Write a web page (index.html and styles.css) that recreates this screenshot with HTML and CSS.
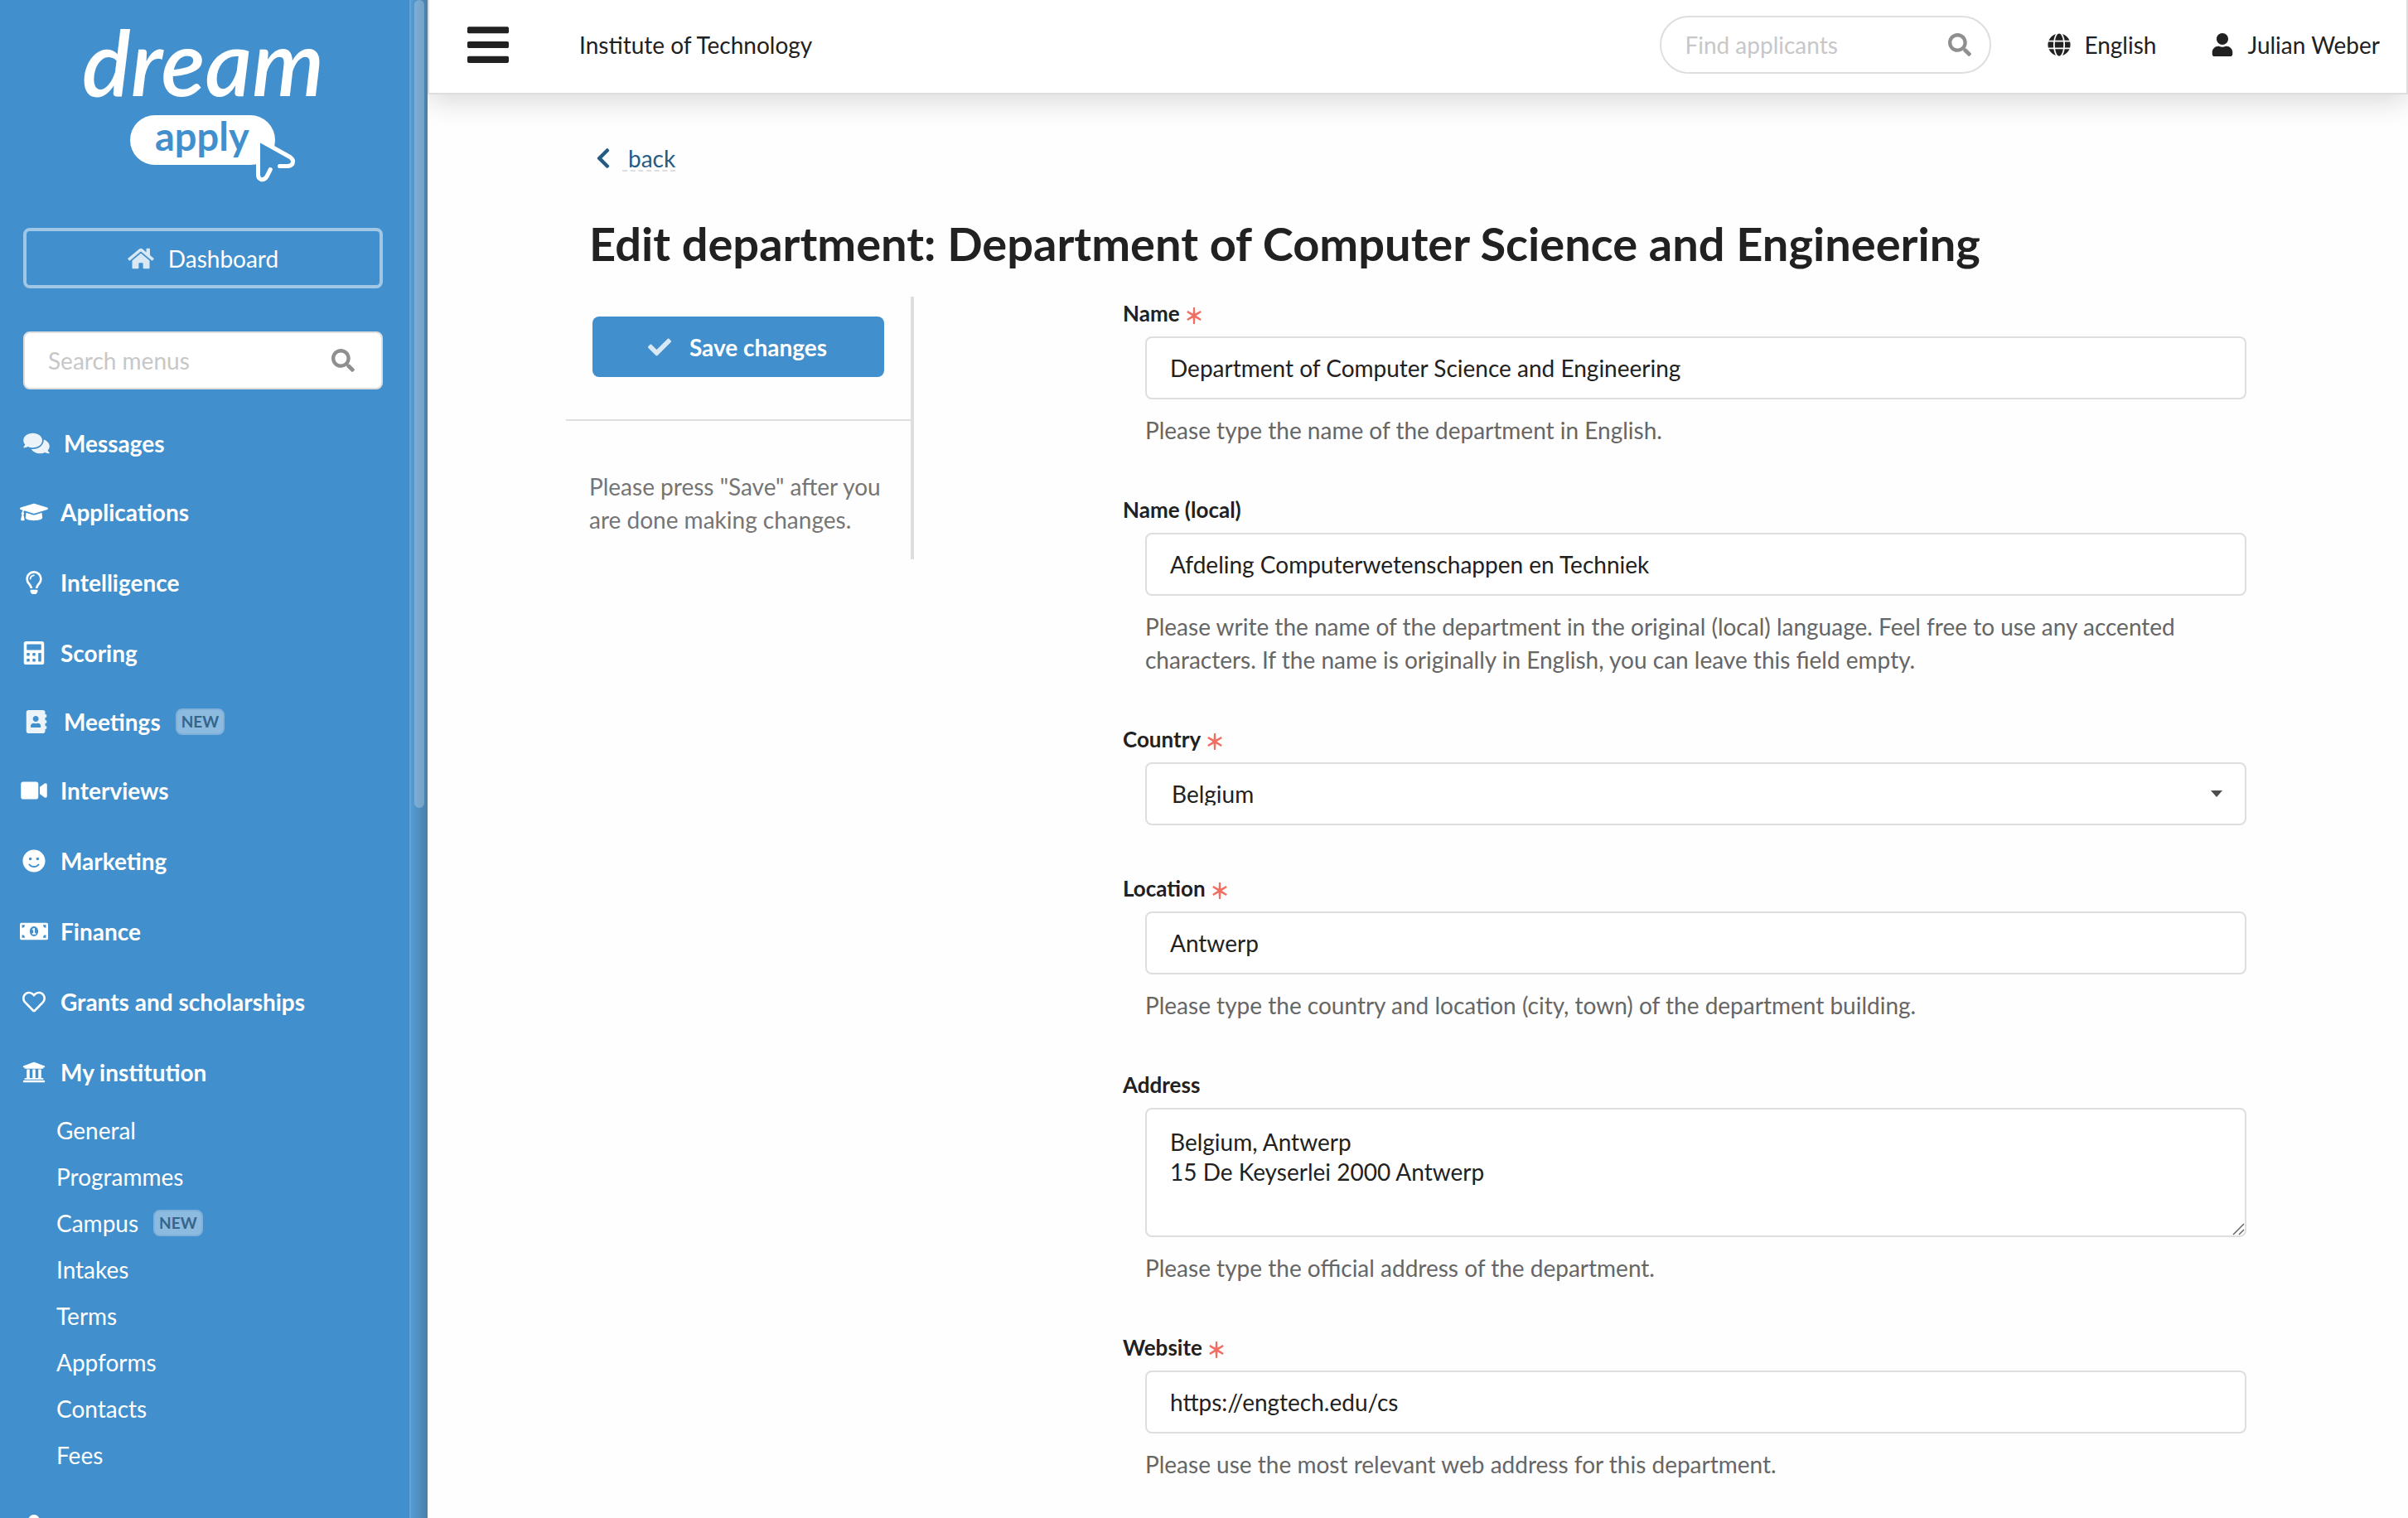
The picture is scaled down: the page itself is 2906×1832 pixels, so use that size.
FILE: index.html
```html
<!DOCTYPE html>
<html lang="en">
<head>
<meta charset="utf-8">
<title>Edit department – DreamApply</title>
<link rel="stylesheet" href="styles.css">
</head>
<body>
<svg class="sprite" aria-hidden="true">
  <symbol id="i-search" viewBox="0 0 512 512"><path d="M505 442.7L405.3 343c-4.5-4.5-10.6-7-17-7H372c27.6-35.3 44-79.7 44-128C416 93.1 322.9 0 208 0S0 93.1 0 208s93.1 208 208 208c48.3 0 92.7-16.4 128-44v16.3c0 6.4 2.5 12.5 7 17l99.7 99.7c9.4 9.4 24.6 9.4 33.9 0l28.3-28.3c9.4-9.4 9.4-24.6.1-34zM208 336c-70.7 0-128-57.2-128-128 0-70.7 57.2-128 128-128 70.7 0 128 57.2 128 128 0 70.7-57.2 128-128 128z"/></symbol>
  <symbol id="i-home" viewBox="0 0 576 512"><path d="M280.37 148.26L96 300.11V464a16 16 0 0 0 16 16l112.06-.29a16 16 0 0 0 15.92-16V368a16 16 0 0 1 16-16h64a16 16 0 0 1 16 16v95.64a16 16 0 0 0 16 16.05L464 480a16 16 0 0 0 16-16V300L295.67 148.26a12.19 12.19 0 0 0-15.3 0zM571.6 251.47L488 182.56V44.05a12 12 0 0 0-12-12h-56a12 12 0 0 0-12 12v72.61L318.47 43a48 48 0 0 0-61 0L4.34 251.47a12 12 0 0 0-1.6 16.9l25.5 31A12 12 0 0 0 45.15 301l235.22-193.74a12.19 12.19 0 0 1 15.3 0L530.9 301a12 12 0 0 0 16.9-1.6l25.5-31a12 12 0 0 0-1.7-16.93z"/></symbol>
  <symbol id="i-comments" viewBox="0 0 576 512"><path d="M416 192c0-88.4-93.1-160-208-160S0 103.6 0 192c0 34.3 14.1 65.9 38 92-13.4 30.2-35.5 54.2-35.8 54.5-2.2 2.3-2.8 5.7-1.5 8.7S4.8 352 8 352c36.6 0 66.9-12.3 88.7-25 32.2 15.7 70.3 25 111.3 25 114.9 0 208-71.6 208-160zm122 220c23.9-26 38-57.7 38-92 0-66.9-53.5-124.2-129.3-148.1.9 6.6 1.3 13.3 1.3 20.1 0 105.9-107.7 192-240 192-10.8 0-21.3-.8-31.7-1.9C207.8 439.6 281.8 480 368 480c41 0 79.1-9.2 111.3-25 21.8 12.7 52.1 25 88.7 25 3.2 0 6.1-1.9 7.3-4.8 1.3-2.9.7-6.3-1.5-8.7-.3-.3-22.4-24.2-35.8-54.5z"/></symbol>
  <symbol id="i-cap" viewBox="0 0 640 512"><path d="M622.34 153.2L343.4 67.5c-15.2-4.67-31.6-4.67-46.79 0L17.66 153.2c-23.54 7.23-23.54 38.36 0 45.59l48.63 14.94c-10.67 13.19-17.23 29.28-17.88 46.9C38.78 266.15 32 276.11 32 288c0 10.78 5.68 19.85 13.86 25.65L20.33 428.53C18.11 438.52 25.71 448 35.94 448h56.11c10.24 0 17.84-9.48 15.62-19.47L82.14 313.65C90.32 307.85 96 298.78 96 288c0-11.57-6.47-21.25-15.66-26.87.76-15.02 8.44-28.3 20.69-36.72L296.6 284.5c9.06 2.78 26.44 6.25 46.79 0l278.95-85.7c23.55-7.24 23.55-38.36 0-45.6zM352.79 315.09c-28.53 8.76-52.84 3.92-65.59 0l-145.02-44.55L128 384c0 35.35 85.96 64 192 64s192-28.65 192-64l-14.18-113.47-145.03 44.56z"/></symbol>
  <symbol id="i-bulb" viewBox="0 0 352 512"><path d="M176 80c-52.94 0-96 43.06-96 96 0 8.84 7.16 16 16 16s16-7.16 16-16c0-35.3 28.72-64 64-64 8.84 0 16-7.16 16-16s-7.16-16-16-16zM96.06 459.17c0 3.15.93 6.22 2.68 8.84l24.51 36.84c2.97 4.46 7.97 7.14 13.32 7.14h78.85c5.36 0 10.36-2.68 13.32-7.14l24.51-36.84c1.74-2.62 2.67-5.7 2.68-8.84l.05-43.18H96.02l.04 43.18zM176 0C73.72 0 0 82.97 0 176c0 44.37 16.45 84.85 43.56 115.78 16.64 18.99 42.74 58.8 52.42 92.16v.06h48v-.12c-.01-4.77-.72-9.51-2.15-14.07-5.59-17.81-22.82-64.77-62.17-109.67-20.54-23.43-31.52-53.15-31.61-84.14-.2-73.64 59.67-128 127.95-128 70.58 0 128 57.42 128 128 0 30.97-11.24 60.85-31.65 84.14-39.11 44.61-56.42 91.47-62.1 109.46a47.507 47.507 0 0 0-2.22 14.3v.1h48v-.05c9.68-33.37 35.78-73.18 52.42-92.16C335.55 260.85 352 220.37 352 176 352 78.8 273.2 0 176 0z"/></symbol>
  <symbol id="i-calc" viewBox="0 0 448 512"><path fill-rule="evenodd" d="M48 0H400A48 48 0 0 1 448 48V464A48 48 0 0 1 400 512H48A48 48 0 0 1 0 464V48A48 48 0 0 1 48 0ZM76 64A12 12 0 0 0 64 76V180A12 12 0 0 0 76 192H372A12 12 0 0 0 384 180V76A12 12 0 0 0 372 64ZM64 268V308A12 12 0 0 0 76 320H116A12 12 0 0 0 128 308V268A12 12 0 0 0 116 256H76A12 12 0 0 0 64 268ZM192 268V308A12 12 0 0 0 204 320H244A12 12 0 0 0 256 308V268A12 12 0 0 0 244 256H204A12 12 0 0 0 192 268ZM64 396V436A12 12 0 0 0 76 448H116A12 12 0 0 0 128 436V396A12 12 0 0 0 116 384H76A12 12 0 0 0 64 396ZM192 396V436A12 12 0 0 0 204 448H244A12 12 0 0 0 256 436V396A12 12 0 0 0 244 384H204A12 12 0 0 0 192 396ZM320 268V436A12 12 0 0 0 332 448H372A12 12 0 0 0 384 436V268A12 12 0 0 0 372 256H332A12 12 0 0 0 320 268Z"/></symbol>
  <symbol id="i-book" viewBox="0 0 448 512"><path d="M436 160c6.6 0 12-5.4 12-12v-40c0-6.6-5.4-12-12-12h-20V48c0-26.5-21.5-48-48-48H48C21.5 0 0 21.5 0 48v416c0 26.5 21.5 48 48 48h320c26.5 0 48-21.5 48-48v-48h20c6.6 0 12-5.4 12-12v-40c0-6.6-5.4-12-12-12h-20v-64h20c6.6 0 12-5.4 12-12v-40c0-6.6-5.4-12-12-12h-20v-64h20zm-228-32c35.3 0 64 28.7 64 64s-28.7 64-64 64-64-28.7-64-64 28.7-64 64-64zm112 236.8c0 10.6-10 19.2-22.4 19.2H118.4C106 384 96 375.4 96 364.8v-19.2c0-31.8 30.1-57.6 67.2-57.6h5c12.3 5.1 25.7 8 39.8 8s27.6-2.9 39.8-8h5c37.1 0 67.2 25.8 67.2 57.6v19.2z"/></symbol>
  <symbol id="i-video" viewBox="0 0 576 512"><path d="M336.2 64H47.8C21.4 64 0 85.4 0 111.8v288.4C0 426.6 21.4 448 47.8 448h288.4c26.4 0 47.8-21.4 47.8-47.8V111.8c0-26.4-21.4-47.8-47.8-47.8zm189.4 37.7L416 177.3v157.4l109.6 75.5c21.2 14.6 50.4-.3 50.4-25.8V127.5c0-25.4-29.1-40.4-50.4-25.8z"/></symbol>
  <symbol id="i-smile" viewBox="0 0 496 512"><path d="M248 8C111 8 0 119 0 256s111 248 248 248 248-111 248-248S385 8 248 8zm80 168c17.7 0 32 14.3 32 32s-14.3 32-32 32-32-14.3-32-32 14.3-32 32-32zm-160 0c17.7 0 32 14.3 32 32s-14.3 32-32 32-32-14.3-32-32 14.3-32 32-32zm194.8 170.2C334.3 380.4 292.5 400 248 400s-86.3-19.6-114.8-53.8c-13.6-16.3 11-36.7 24.6-20.5 22.4 26.9 55.2 42.2 90.2 42.2s67.8-15.4 90.2-42.2c13.4-16.2 38.1 4.2 24.6 20.5z"/></symbol>
  <symbol id="i-money" viewBox="0 0 640 512"><path fill-rule="evenodd" d="M32 64H608A32 32 0 0 1 640 96V416A32 32 0 0 1 608 448H32A32 32 0 0 1 0 416V96A32 32 0 0 1 32 64ZM48 112V176A64 64 0 0 0 112 112ZM592 112H528A64 64 0 0 0 592 176ZM48 400H112A64 64 0 0 0 48 336ZM592 400V336A64 64 0 0 0 528 400ZM320 144C267 144 224 194 224 256S267 368 320 368 416 318 416 256 373 144 320 144Z"/><path d="M284 216L322 200V308M280 310H364" fill="none" stroke="currentColor" stroke-width="34"/></symbol>
  <symbol id="i-heart" viewBox="0 0 512 512"><path d="M458.4 64.3C400.6 15.7 311.3 23 256 79.3 200.7 23 111.4 15.6 53.6 64.3-21.6 127.6-10.6 230.8 43 285.5l175.4 178.7c10 10.2 23.4 15.9 37.6 15.9 14.3 0 27.6-5.6 37.6-15.8L469 285.6c53.5-54.7 64.7-157.9-10.6-221.3zm-23.6 187.5L259.4 430.5c-2.4 2.4-4.4 2.4-6.8 0L77.2 251.8c-36.5-37.2-43.9-107.6 7.3-150.7 38.9-32.7 98.9-27.8 136.5 10.5l35 35.7 35-35.7c37.8-38.5 97.8-43.2 136.5-10.6 51.1 43.1 43.5 113.9 7.3 150.8z"/></symbol>
  <symbol id="i-university" viewBox="0 0 512 512"><path d="M496 128v16a8 8 0 0 1-8 8h-24v12c0 6.627-5.373 12-12 12H60c-6.627 0-12-5.373-12-12v-12H24a8 8 0 0 1-8-8v-16a8 8 0 0 1 4.941-7.392l232-88a7.996 7.996 0 0 1 6.118 0l232 88A8 8 0 0 1 496 128zm-24 304H40c-13.255 0-24 10.745-24 24v16a8 8 0 0 0 8 8h464a8 8 0 0 0 8-8v-16c0-13.255-10.745-24-24-24zM96 192v192H60c-6.627 0-12 5.373-12 12v20h416v-20c0-6.627-5.373-12-12-12h-36V192h-64v192h-64V192h-64v192h-64V192H96z"/></symbol>
  <symbol id="i-user" viewBox="0 0 448 512"><path d="M224 256c70.7 0 128-57.3 128-128S294.7 0 224 0 96 57.3 96 128s57.3 128 128 128zm89.6 32h-16.7c-22.2 10.2-46.9 16-72.9 16s-50.6-5.8-72.9-16h-16.7C60.2 288 0 348.2 0 422.4V464c0 26.5 21.5 48 48 48h352c26.5 0 48-21.5 48-48v-41.6c0-74.2-60.2-134.4-134.4-134.4z"/></symbol>
  <symbol id="i-globe" viewBox="0 0 496 512"><path d="M336.5 160C322 70.7 287.8 8 248 8s-74 62.7-88.5 152h177zM152 256c0 22.2 1.2 43.5 3.3 64h185.3c2.1-20.5 3.3-41.8 3.3-64s-1.2-43.5-3.3-64H155.3c-2.1 20.5-3.3 41.8-3.3 64zm324.7-96c-28.6-67.9-86.5-120.4-158-141.6 24.4 33.8 41.2 84.7 50 141.6h108zM177.2 18.4C105.8 39.6 47.8 92.1 19.3 160h108c8.7-56.9 25.5-107.8 49.9-141.6zM487.4 192H372.7c2.1 21 3.3 42.5 3.3 64s-1.2 43-3.3 64h114.6c5.5-20.5 8.6-41.8 8.6-64s-3.1-43.5-8.5-64zM120 256c0-21.5 1.2-43 3.3-64H8.6C3.2 212.5 0 233.8 0 256s3.2 43.5 8.6 64h114.6c-2-21-3.2-42.5-3.2-64zm39.5 96c14.5 89.3 48.7 152 88.5 152s74-62.7 88.5-152h-177zm159.3 141.6c71.4-21.2 129.4-73.7 158-141.6h-108c-8.8 56.9-25.6 107.8-50 141.6zM19.3 352c28.6 67.9 86.5 120.4 158 141.6-24.4-33.8-41.2-84.7-50-141.6h-108z"/></symbol>
  <symbol id="i-bars" viewBox="0 0 448 512"><path d="M16 132h416c8.837 0 16-7.163 16-16V76c0-8.837-7.163-16-16-16H16C7.163 60 0 67.163 0 76v40c0 8.837 7.163 16 16 16zm0 160h416c8.837 0 16-7.163 16-16v-40c0-8.837-7.163-16-16-16H16c-8.837 0-16 7.163-16 16v40c0 8.837 7.163 16 16 16zm0 160h416c8.837 0 16-7.163 16-16v-40c0-8.837-7.163-16-16-16H16c-8.837 0-16 7.163-16 16v40c0 8.837 7.163 16 16 16z"/></symbol>
  <symbol id="i-check" viewBox="0 0 512 512"><path d="M173.898 439.404l-166.4-166.4c-9.997-9.997-9.997-26.206 0-36.204l36.203-36.204c9.997-9.998 26.207-9.998 36.204 0L192 312.69 432.095 72.596c9.997-9.997 26.207-9.997 36.204 0l36.203 36.204c9.997 9.997 9.997 26.206 0 36.204l-294.4 294.401c-9.998 9.997-26.207 9.997-36.204-.001z"/></symbol>
  <symbol id="i-left" viewBox="0 0 320 512"><path d="M34.52 239.03L228.87 44.69c9.37-9.37 24.57-9.37 33.94 0l22.67 22.67c9.36 9.36 9.37 24.52.04 33.9L131.49 256l154.02 154.75c9.34 9.38 9.32 24.54-.04 33.9l-22.67 22.67c-9.37 9.37-24.57 9.37-33.94 0L34.52 272.97c-9.37-9.37-9.37-24.57 0-33.94z"/></symbol>
  <symbol id="i-required" viewBox="0 0 18 20"><path d="M8 0H10L10.400 7.600L16.600 4L17.800 6L11.500 10L17.800 14L16.600 16L10.400 12.400L10 20H8L7.600 12.400L1.400 16L.200 14L6.500 10L.200 6L1.400 4L7.600 7.600Z"/></symbol>
</svg>

<div class="app">
  <aside class="sidebar">
    <div class="sidebar-body">
      <a class="logo" href="#" aria-label="DreamApply">
        <svg width="490" height="240" viewBox="0 0 490 240">
          <text class="logo-dream" x="99" y="116">dream</text>
          <rect x="157" y="139" width="175" height="60" rx="30" fill="#fff"/>
          <text class="logo-apply" x="187" y="182">apply</text>
          <path class="logo-hole" d="M311 169L352 190L350 201L337 201L326 204L318 217L311 214Z"/>
          <path class="logo-cursor" d="M315 170L350 189.500Q355 193 353 197.500Q351 200.500 347 200.500H337.500M326.300 204.500L322 213Q319 217.500 315 216.500Q311.500 215 311.500 211V169"/>
        </svg>
      </a>
      <a class="dashboard" href="#"><svg class="icon w-home"><use href="#i-home"/></svg>Dashboard</a>
      <label class="search menu-search">
        <input type="text" placeholder="Search menus" aria-label="Search menus">
        <svg class="icon w-28"><use href="#i-search"/></svg>
      </label>
      <nav class="menu">
        <a class="item item-soft" href="#"><svg class="icon"><use href="#i-comments"/></svg>Messages</a>
        <a class="item" href="#"><svg class="icon"><use href="#i-cap"/></svg>Applications</a>
        <a class="item" href="#"><svg class="icon"><use href="#i-bulb"/></svg>Intelligence</a>
        <a class="item" href="#"><svg class="icon"><use href="#i-calc"/></svg>Scoring</a>
        <a class="item item-soft" href="#"><svg class="icon"><use href="#i-book"/></svg>Meetings<span class="badge">NEW</span></a>
        <a class="item" href="#"><svg class="icon"><use href="#i-video"/></svg>Interviews</a>
        <a class="item" href="#"><svg class="icon"><use href="#i-smile"/></svg>Marketing</a>
        <a class="item" href="#"><svg class="icon"><use href="#i-money"/></svg>Finance</a>
        <a class="item" href="#"><svg class="icon"><use href="#i-heart"/></svg>Grants and scholarships</a>
        <a class="item" href="#"><svg class="icon"><use href="#i-university"/></svg>My institution</a>
        <div class="submenu">
          <a href="#">General</a>
          <a href="#">Programmes</a>
          <a href="#">Campus<span class="badge">NEW</span></a>
          <a href="#">Intakes</a>
          <a href="#">Terms</a>
          <a href="#">Appforms</a>
          <a href="#">Contacts</a>
          <a href="#">Fees</a>
        </div>
        <a class="item" href="#" aria-label="More"><svg class="icon"><use href="#i-user"/></svg></a>
      </nav>
    </div>
    <div class="track"><div class="thumb"></div></div>
  </aside>

  <div class="page">
    <header class="topbar">
      <button class="burger" type="button" aria-label="Toggle menu"><svg><use href="#i-bars"/></svg></button>
      <span class="institution">Institute of Technology</span>
      <label class="search applicant-search">
        <input type="text" placeholder="Find applicants" aria-label="Find applicants">
        <svg class="icon w-28"><use href="#i-search"/></svg>
      </label>
      <a class="toplink" href="#"><svg class="icon w-28"><use href="#i-globe"/></svg>English</a>
      <a class="toplink" href="#"><svg class="icon w-28"><use href="#i-user"/></svg>Julian Weber</a>
    </header>

    <main class="content">
      <a class="back" href="#"><svg class="icon"><use href="#i-left"/></svg><span>back</span></a>
      <h1>Edit department: Department of Computer Science and Engineering</h1>
      <form class="layout">
        <div class="panel">
          <div class="panel-actions">
            <button class="save" type="submit"><svg class="icon w-28"><use href="#i-check"/></svg>Save changes</button>
          </div>
          <p>Please press "Save" after you are done making changes.</p>
        </div>
        <div class="fields">
          <div class="field">
            <label for="name">Name<svg class="required"><use href="#i-required"/></svg></label>
            <input id="name" type="text" value="Department of Computer Science and Engineering">
            <p class="help">Please type the name of the department in English.</p>
          </div>
          <div class="field">
            <label for="local">Name (local)</label>
            <input id="local" type="text" value="Afdeling Computerwetenschappen en Techniek">
            <p class="help">Please write the name of the department in the original (local) language. Feel free to use any accented characters. If the name is originally in English, you can leave this field empty.</p>
          </div>
          <div class="field">
            <label for="country">Country<svg class="required"><use href="#i-required"/></svg></label>
            <select id="country"><option>Belgium</option></select>
          </div>
          <div class="field">
            <label for="location">Location<svg class="required"><use href="#i-required"/></svg></label>
            <input id="location" type="text" value="Antwerp">
            <p class="help">Please type the country and location (city, town) of the department building.</p>
          </div>
          <div class="field">
            <label for="address">Address</label>
            <textarea id="address">Belgium, Antwerp
15 De Keyserlei 2000 Antwerp</textarea>
            <p class="help">Please type the official address of the department.</p>
          </div>
          <div class="field">
            <label for="website">Website<svg class="required"><use href="#i-required"/></svg></label>
            <input id="website" type="text" value="https://engtech.edu/cs">
            <p class="help">Please use the most relevant web address for this department.</p>
          </div>
        </div>
      </form>
    </main>
  </div>
</div>
</body>
</html>
```
FILE: styles.css
```css
:root {
  --blue: #4190cd;
  --ink: #212121;
  --line: #dedede;
}

* { box-sizing: border-box; }

body {
  margin: 0;
  background: #fefefe;
  color: var(--ink);
  font: 28px/40px Lato, "Noto Sans", sans-serif;
}

a { color: inherit; text-decoration: none; }
p, h1 { margin: 0; }
input, select, textarea, button { font: inherit; color: inherit; }
svg { fill: currentColor; flex: none; }

.sprite { display: none; }
.icon { width: 34px; height: 28px; }
.w-28 { width: 28px; }
.w-home { width: 32px; }

.app { display: flex; align-items: flex-start; }

/* Sidebar */
.sidebar {
  position: sticky;
  top: 0;
  z-index: 2;
  display: flex;
  flex: none;
  width: 516px;
  height: 100vh;
  overflow: hidden;
  background: var(--blue);
  color: #fff;
}

.sidebar-body { flex: 1; min-width: 0; padding: 0 32px 0 28px; }

.logo { display: block; height: 275px; margin: 0 -32px 0 -28px; }
.logo svg { display: block; }
.logo-dream { font: italic 600 110px Lato, sans-serif; fill: #fff; }
.logo-apply { font: 700 47px Lato, sans-serif; fill: var(--blue); }
.logo-hole { fill: var(--blue); }
.logo-cursor {
  fill: none;
  stroke: #fff;
  stroke-width: 5;
  stroke-linecap: round;
  stroke-linejoin: round;
}

.dashboard {
  display: flex;
  align-items: center;
  justify-content: center;
  gap: 17px;
  height: 73px;
  margin-bottom: 52px;
  border: 4px solid #a0c8e6;
  border-radius: 8px;
}
.dashboard .icon { opacity: .8; }

.search {
  display: flex;
  align-items: center;
  height: 70px;
  border: 2px solid var(--line);
  border-radius: 8px;
  background: #fff;
  color: #8f8f8f;
}
.search input {
  flex: 1;
  min-width: 0;
  padding: 0 0 0 28px;
  border: 0;
  outline: 0;
  background: none;
  color: var(--ink);
}
.search input::placeholder { color: #c7c7c7; opacity: 1; }
.menu-search { padding-right: 32px; }

.menu { margin: 24px 0 0 -28px; font-weight: 700; }
.item {
  display: flex;
  align-items: center;
  gap: 15px;
  height: 85px;
  padding-left: 24px;
}
.item-soft { gap: 16px; height: 81px; padding-left: 27px; }
.item-soft .icon { opacity: .9; }

.badge {
  display: inline-block;
  height: 32px;
  padding: 0 5px;
  border: 2px solid #7fb1da;
  border-radius: 8px;
  background: #8dbbe0;
  color: #33658d;
  font-size: 19px;
  font-weight: 700;
  line-height: 27px;
}
.item .badge { margin-left: 2px; }

.submenu { margin-bottom: 15px; font-weight: 400; }
.submenu a {
  display: flex;
  align-items: center;
  gap: 18px;
  height: 56px;
  padding-left: 68px;
}

.track {
  flex: none;
  width: 22px;
  padding: 0 4px;
  border-left: 2px solid #64a5d8;
  background: linear-gradient(90deg, #559cd4, #4a7ea9);
}
.thumb {
  width: 12px;
  height: 53.2%;
  border-radius: 6px;
  background: rgba(255, 255, 255, .24);
}

/* Top bar */
.page { flex: 1; min-width: 0; }
.topbar {
  display: flex;
  align-items: center;
  height: 114px;
  padding: 0 32px 4px 46px;
  border: 2px solid var(--line);
  border-top: 0;
  background: #fff;
  box-shadow: 0 8px 32px rgba(0, 0, 0, .15);
}
.burger {
  width: 50px;
  height: 58px;
  padding: 0;
  border: 0;
  background: none;
}
.burger svg { display: block; width: 50px; height: 58px; }
.institution { margin: 0 auto 0 85px; }
.applicant-search { width: 400px; margin-right: 2px; padding-right: 22px; border-radius: 36px; }
.toplink { display: flex; align-items: center; gap: 16px; margin-left: 66px; }

/* Content */
.content { padding: 57px 195px 20px; }
.back { display: flex; align-items: center; gap: 6px; width: max-content; height: 40px; color: #255c86; }
.back span {
  height: 32px;
  padding-left: 7px;
  border-bottom: 2px dashed var(--line);
  line-height: 32px;
}

h1 { margin: 47px 0 28px; font-size: 56px; line-height: 72px; }

.layout {
  display: grid;
  grid-template-columns: 392px 1fr;
  column-gap: 252px;
  align-items: start;
}

.panel { margin-left: -28px; border-right: 4px solid var(--line); }
.panel-actions { padding: 24px 32px 51px; border-bottom: 2px solid var(--line); }
.panel p { padding: 59px 28px 28px; color: #757575; }
.save {
  display: flex;
  align-items: center;
  justify-content: center;
  gap: 22px;
  width: 100%;
  height: 73px;
  padding-right: 8px;
  border: 0;
  border-radius: 8px;
  background: var(--blue);
  color: #fff;
  font-weight: 700;
}
.save .icon { opacity: .8; }

.fields { padding-top: 4px; }
.field { display: flex; flex-direction: column; margin-bottom: 60px; }
.field label {
  display: flex;
  align-items: center;
  gap: 8px;
  margin-bottom: 12px;
  font-size: 26px;
  font-weight: 700;
  line-height: 32px;
}
.required { width: 18px; height: 20px; margin-top: 6px; color: #f06e62; }

.field input,
.field select,
.field textarea {
  height: 76px;
  margin-left: 27px;
  padding: 0 28px;
  border: 2px solid var(--line);
  border-radius: 8px;
  outline: 0;
  background: #fff;
}
.field select {
  appearance: none;
  padding: 0 30px;
  background: #fff url("data:image/svg+xml,%3Csvg xmlns='http://www.w3.org/2000/svg' width='14' height='8'%3E%3Cpath d='M0 0h14L7 8z' fill='%234d4d4d'/%3E%3C/svg%3E") no-repeat right 27px center;
  line-height: 28px;
}
.field textarea {
  height: 156px;
  padding: 21px 28px;
  line-height: 36px;
  resize: vertical;
}
.field textarea::-webkit-resizer {
  background: url("data:image/svg+xml,%3Csvg xmlns='http://www.w3.org/2000/svg' width='15' height='15'%3E%3Cpath d='M1 14L14 1M8 14l6-6' stroke='%23666' stroke-width='1.500'/%3E%3C/svg%3E");
}

.help { margin: 17px 0 0 27px; color: #666; }
```
